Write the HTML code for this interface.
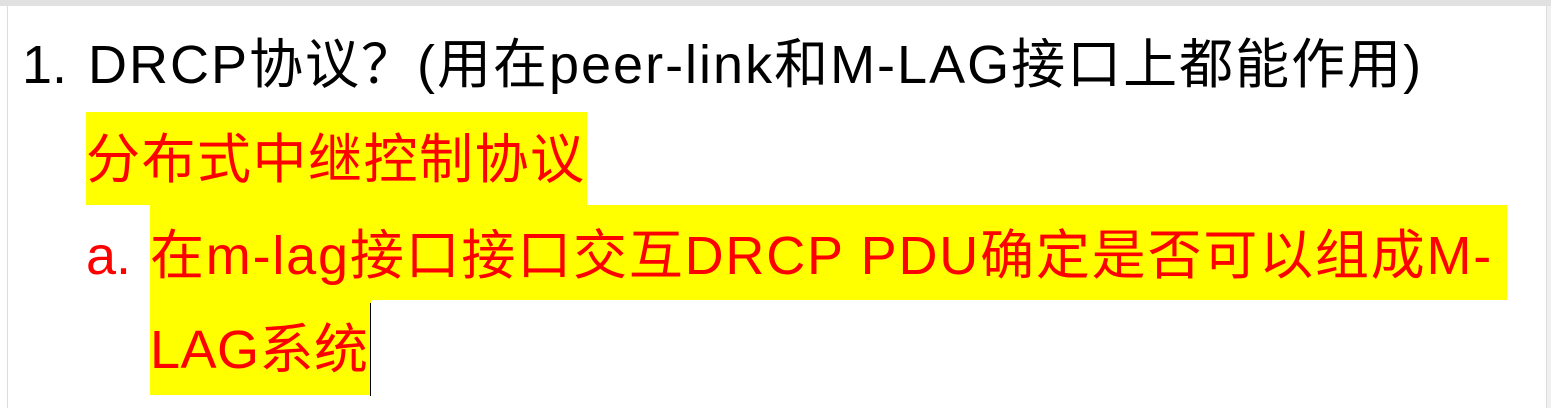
<!DOCTYPE html>
<html><head><meta charset="utf-8"><style>
html,body{margin:0;padding:0;width:1551px;height:408px;overflow:hidden;background:#fff;}
.top{position:absolute;left:0;top:0;width:1551px;height:6px;background:#e1e1e1;}
.lb{position:absolute;left:7px;top:6px;width:1px;height:402px;background:#ddd;}
.rb{position:absolute;left:1546px;top:6px;width:5px;height:402px;background:#f0f0f0;border-left:1px solid #ddd;}
.t{position:absolute;white-space:nowrap;font-family:"Liberation Sans","Noto Sans CJK SC",sans-serif;font-size:54px;line-height:96px;}
.y{position:absolute;background:#ffff00;}
.r{color:#ff0000;}
</style></head><body>
<div class="top"></div><div class="lb"></div><div class="rb"></div>
<div class="y" style="left:86px;top:112px;width:501px;height:93px"></div>
<div class="y" style="left:150px;top:205px;width:1357px;height:95px"></div>
<div class="y" style="left:150px;top:300px;width:221px;height:95px"></div>
<div style="position:absolute;left:370px;top:303px;width:1px;height:93px;background:#000"></div>
<div class="t" style="left:22px;top:17px;color:#000">1.</div>
<div class="t" style="left:88px;top:17px;color:#000;letter-spacing:2px">DRCP协议？(用在peer-link和M-LAG接口上都能作用)</div>
<div class="t r" style="left:86px;top:112px;letter-spacing:1.5px">分布式中继控制协议</div>
<div class="t r" style="left:86px;top:208px">a.</div>
<div class="t r" style="left:150px;top:208px;letter-spacing:1.8px">在m-lag接口接口交互DRCP PDU确定是否可以组成M-</div>
<div class="t r" style="left:150px;top:302px;letter-spacing:0.5px">LAG系统</div>
</body></html>
